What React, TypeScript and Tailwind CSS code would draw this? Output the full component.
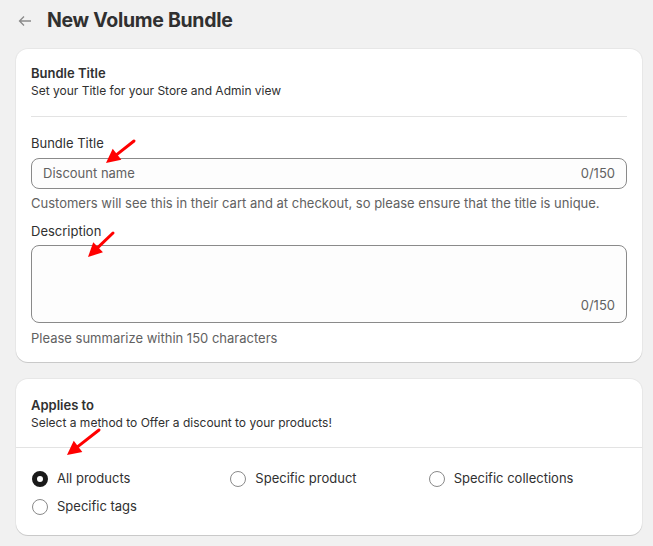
import React from "react";

function Arrow({ x1, y1, x2, y2 }: { x1: number; y1: number; x2: number; y2: number }) {
  const dx = x2 - x1;
  const dy = y2 - y1;
  const len = Math.hypot(dx, dy);
  const ux = dx / len;
  const uy = dy / len;
  const headLen = 14;
  const headW = 7;
  const bx = x2 - ux * headLen;
  const by = y2 - uy * headLen;
  const px = -uy;
  const py = ux;
  return (
    <g>
      <line x1={x1} y1={y1} x2={bx + ux * 2} y2={by + uy * 2} stroke="#f00" strokeWidth={3} strokeLinecap="round" />
      <polygon
        points={`${x2},${y2} ${bx + px * headW},${by + py * headW} ${bx - px * headW},${by - py * headW}`}
        fill="#f00"
      />
    </g>
  );
}

function Radio({ label, checked }: { label: string; checked?: boolean }) {
  return (
    <label className="flex items-center gap-[9px] h-[20px]">
      <span
        className={
          checked
            ? "w-[16px] h-[16px] rounded-full border-[5px] border-[#1a1a1a] bg-white"
            : "w-[16px] h-[16px] rounded-full border border-[#8a8a8a] bg-white"
        }
      />
      <span className="text-[13px] text-[#303030]">{label}</span>
    </label>
  );
}

export default function App() {
  return (
    <div
      className="relative min-h-[546px] bg-[#f1f1f1] text-[#303030]"
      style={{ fontFamily: "Inter, 'Noto Sans', sans-serif" }}
    >
      <div className="flex items-center h-[40px] pt-[2px] pl-[17px]">
        <svg width="16" height="16" viewBox="0 0 16 16" className="mr-[14px]">
          <path d="M14 8H2.5M7 3.5L2.5 8L7 12.5" stroke="#8a8a8a" strokeWidth="1.3" fill="none" />
        </svg>
        <h1 className="text-[19.5px] font-bold tracking-[-0.3px] text-[#303030]">New Volume Bundle</h1>
      </div>

      <div className="pl-[16px] pr-[11px] pt-[9px] pb-[12px] flex flex-col gap-[17px]">
        <section className="bg-white rounded-[12px] shadow-[0_1px_0_0_rgba(0,0,0,0.13),0_0_0_1px_rgba(0,0,0,0.04)] px-[15px] pt-[16px] pb-[14px]">
          <div className="leading-[17px]">
            <h2 className="text-[13px] font-semibold">Bundle Title</h2>
            <p className="text-[12px]">Set your Title for your Store and Admin view</p>
          </div>
          <div className="h-px bg-[#e3e3e3] mt-[17px]" />

          <div className="mt-[16px] text-[13px] leading-[20px]">Bundle Title</div>
          <div className="mt-[5px] h-[31px] rounded-[8px] border border-[#8a8a8a] bg-[#fdfdfd] flex items-center justify-between px-[11px]">
            <span className="text-[13px] text-[#616161]">Discount name</span>
            <span className="text-[13px] text-[#616161]">0/150</span>
          </div>
          <p className="mt-[4px] text-[13px] leading-[20px] text-[#616161]">
            Customers will see this in their cart and at checkout, so please ensure that the title is unique.
          </p>

          <div className="mt-[8px] text-[13px] leading-[20px]">Description</div>
          <div className="mt-[4px] h-[78px] rounded-[8px] border border-[#8a8a8a] bg-[#fdfdfd] flex items-end justify-end px-[11px] pb-[7px]">
            <span className="text-[13px] text-[#616161]">0/150</span>
          </div>
          <p className="mt-[5px] text-[13px] leading-[20px] text-[#616161]">Please summarize within 150 characters</p>
        </section>

        <section className="bg-white rounded-[12px] shadow-[0_1px_0_0_rgba(0,0,0,0.13),0_0_0_1px_rgba(0,0,0,0.04)] pt-[18px] pb-[18px]">
          <div className="px-[15px] leading-[17px]">
            <h2 className="text-[13px] font-semibold">Applies to</h2>
            <p className="text-[12px]">Select a method to Offer a discount to your products!</p>
          </div>
          <div className="h-px bg-[#e3e3e3] mt-[16px]" />
          <div className="pl-[16px] pr-[15px] mt-[21px] grid grid-cols-3 gap-y-[8px]">
            <Radio label="All products" checked />
            <Radio label="Specific product" />
            <Radio label="Specific collections" />
            <Radio label="Specific tags" />
          </div>
        </section>
      </div>

      <svg className="absolute inset-0 pointer-events-none" width="653" height="546">
        <Arrow x1={134} y1={141} x2={106} y2={163} />
        <Arrow x1={113} y1={233} x2={88} y2={257} />
        <Arrow x1={99} y1={430} x2={67} y2={455} />
      </svg>
    </div>
  );
}
